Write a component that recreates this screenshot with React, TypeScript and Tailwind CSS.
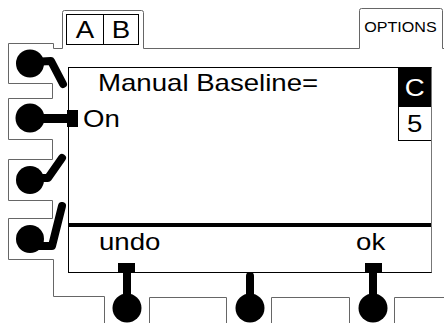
import React from "react";

const GRAY = "#666";

function Drawing() {
  return (
    <svg
      className="pointer-events-none absolute inset-0"
      width="444"
      height="323"
      viewBox="0 0 444 323"
    >
      {/* outlines of the key frames and tabs */}
      <g fill="none" stroke={GRAY} strokeWidth="1" strokeLinejoin="round">
        <path d="M8.5 43.5 H53.5 V48.5 H62.5 V12.5 Q62.5 10.5 64.5 10.5 H141.5 Q143.5 10.5 143.5 12.5 V48.5 H359.5 V10.5 Q359.5 8.5 361.5 8.5 H440.5 Q442.5 8.5 442.5 10.5 V48.5 H444" />
        <path d="M8.5 43.5 V83.5 H52.5 V98.5 H8.5 V139.5 H52.5 V159.5 H8.5 V200.5 H52.5 V218.5 H8.5 V259.5 H53.5 V296.5 H104.5 V323" />
        <path d="M149.5 323 V297.5 H226.5 V323" />
        <path d="M271.5 323 V297.5 H349.5 V323" />
        <path d="M394.5 323 V297.5 H444" />
      </g>

      {/* side knobs */}
      <g fill="#000" stroke="#000" strokeLinecap="round" strokeLinejoin="round">
        <circle cx="30" cy="63.5" r="14" stroke="none" />
        <polyline points="32,62 51,61 63,84" fill="none" strokeWidth="8" />

        <circle cx="30" cy="118" r="14.5" stroke="none" />
        <rect x="30" y="114" width="40" height="9" stroke="none" />
        <rect x="67" y="110" width="11" height="17" stroke="none" />

        <circle cx="30" cy="180" r="14" stroke="none" />
        <polyline points="30,178 48,178 62,158" fill="none" strokeWidth="8" />

        <circle cx="30" cy="239" r="14" stroke="none" />
        <polyline points="30,246 52,246 62,206" fill="none" strokeWidth="8" />
      </g>

      {/* bottom knobs */}
      <g fill="#000" stroke="#000" strokeLinecap="round">
        <rect x="118" y="263" width="17" height="10" stroke="none" />
        <rect x="123" y="270" width="8" height="30" stroke="none" />
        <circle cx="127" cy="308" r="14.5" stroke="none" />

        <line x1="250" y1="276" x2="250" y2="300" strokeWidth="8" />
        <circle cx="250" cy="308" r="14.5" stroke="none" />

        <rect x="365" y="263" width="17" height="10" stroke="none" />
        <rect x="369" y="270" width="8" height="30" stroke="none" />
        <circle cx="373" cy="308" r="14.5" stroke="none" />
      </g>
    </svg>
  );
}

// the device font is drawn a little wide
function Wide({ children, left }: { children: React.ReactNode; left?: boolean }) {
  return (
    <span className={"inline-block scale-x-[1.15] " + (left ? "origin-left" : "origin-center")}>
      {children}
    </span>
  );
}

export default function App() {
  return (
    <div className="relative h-[323px] w-[444px] overflow-hidden bg-white font-['Liberation_Sans',Arial,sans-serif] text-black">
      {/* tabs */}
      <div className="flex h-[67px] items-start">
        <div className="ml-[66px] mt-[14px] flex h-[31px] w-[73px] border border-black text-[24px] leading-[29px]">
          <span className="w-[36px] text-center">
            <Wide>A</Wide>
          </span>
          <span className="flex-1 border-l border-black text-center">
            <Wide>B</Wide>
          </span>
        </div>
        <div className="ml-auto mr-[2px] mt-[19px] w-[83px] text-center text-[14px] leading-[16px]">
          <Wide>OPTIONS</Wide>
        </div>
      </div>

      {/* screen */}
      <div className="ml-[68px] flex h-[206px] w-[364px] flex-col border border-black border-r-[#777]">
        <div className="flex h-[155px]">
          <div className="flex flex-1 flex-col text-[24px] leading-[24px]">
            <div className="mt-[3px] pl-[29px]">
              <Wide left>Manual Baseline=</Wide>
            </div>
            <div className="mt-[12px] pl-[14px]">
              <Wide left>On</Wide>
            </div>
          </div>
          <div className="flex w-[33px] flex-col text-[24px]">
            <div className="flex h-[39px] items-center justify-center bg-black text-white">
              <Wide>C</Wide>
            </div>
            <div className="flex h-[34px] items-center justify-center border-b border-l border-black">
              <Wide>5</Wide>
            </div>
          </div>
        </div>
        <div className="h-[4px] bg-black" />
        <div className="grid flex-1 grid-cols-3 text-[24px] leading-[24px]">
          <div className="mt-[3px] text-center">
            <Wide>undo</Wide>
          </div>
          <div />
          <div className="mt-[3px] text-center">
            <Wide>ok</Wide>
          </div>
        </div>
      </div>

      <Drawing />
    </div>
  );
}
